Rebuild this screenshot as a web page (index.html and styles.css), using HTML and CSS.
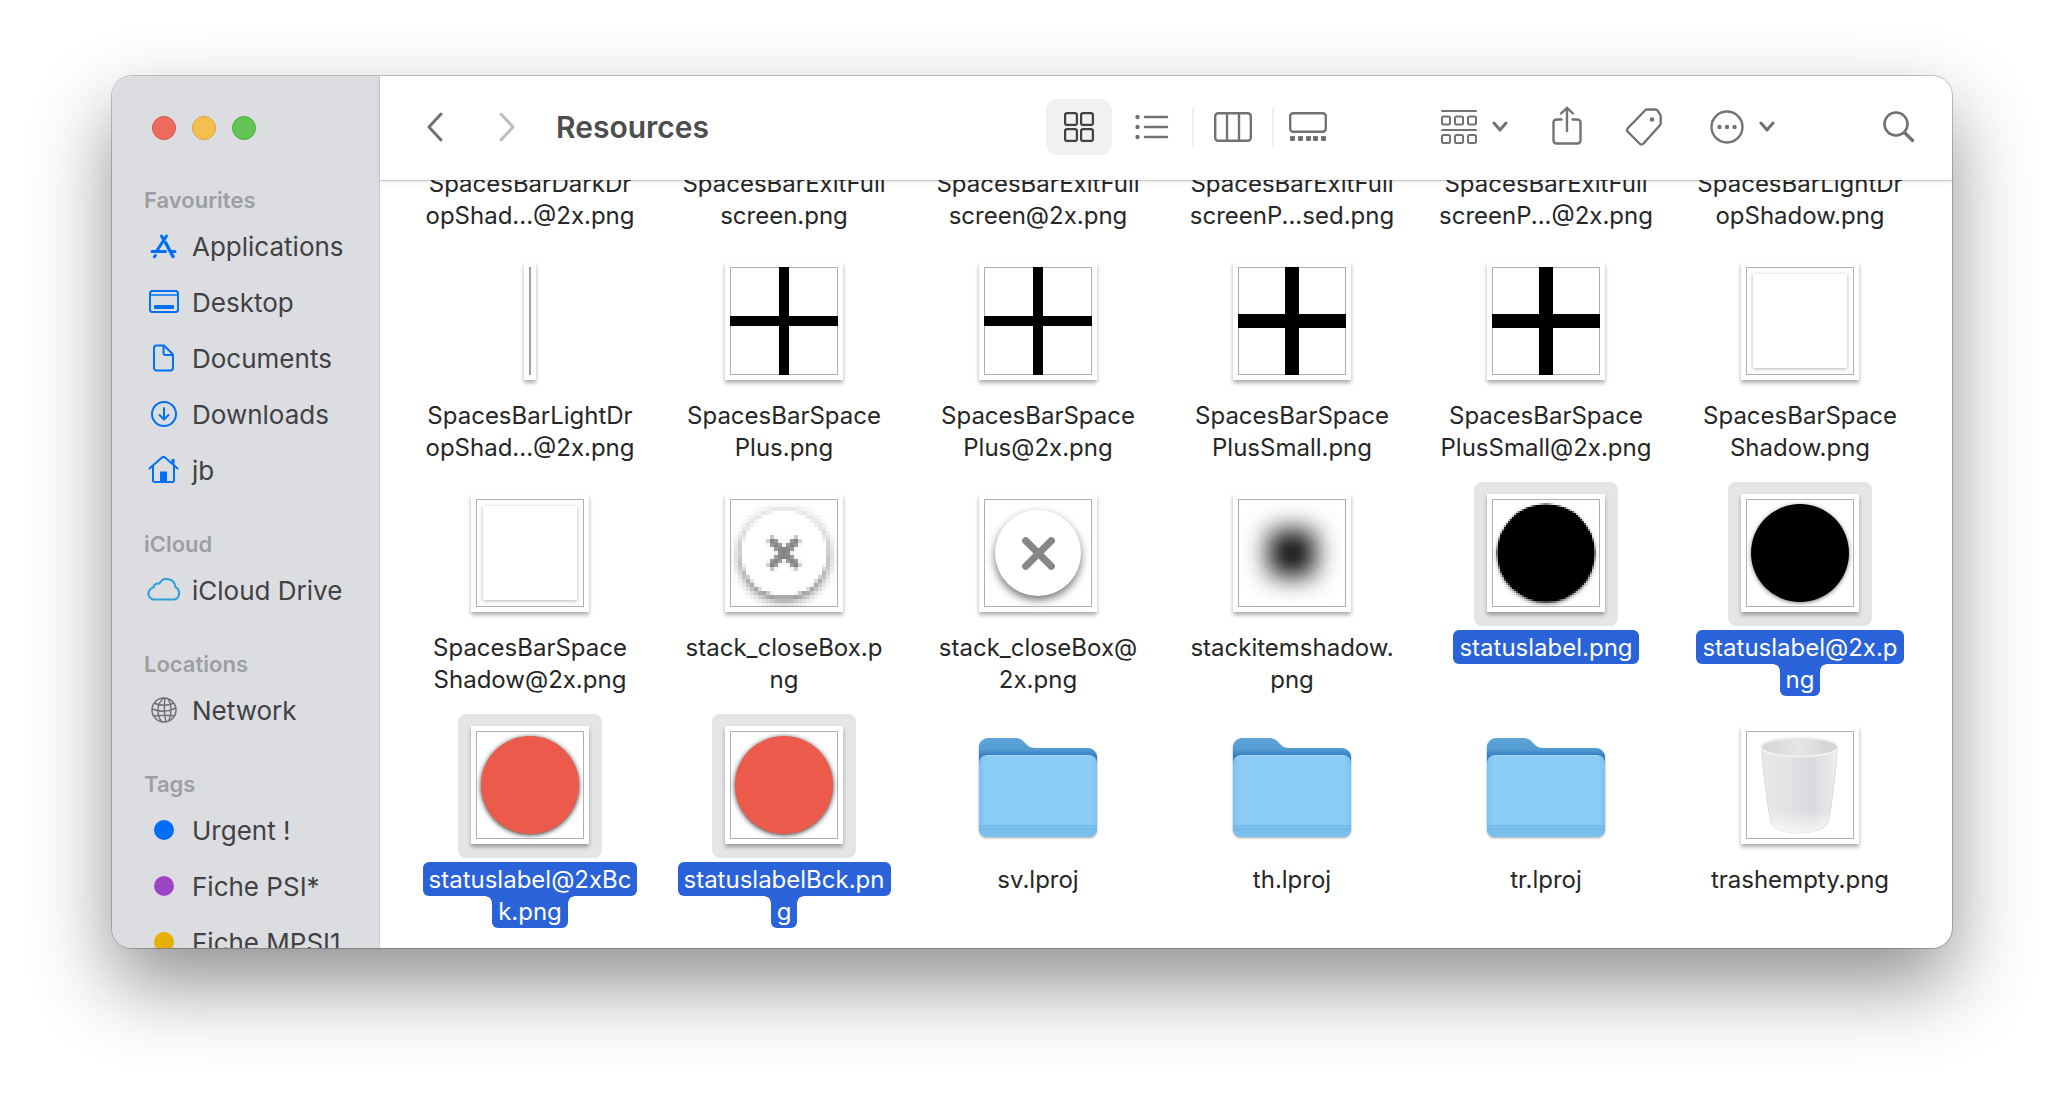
FILE: index.html
```html
<!DOCTYPE html>
<html lang="en">
<head>
<meta charset="utf-8">
<title>Resources</title>
<link rel="stylesheet" href="styles.css">
</head>
<body>
<svg class="defs" aria-hidden="true">
  <defs>
    <linearGradient id="folder-back" x1="0" y1="0" x2="0" y2="1"><stop offset="0" stop-color="#5ea5d8"/><stop offset=".3" stop-color="#529bd2"/><stop offset=".5" stop-color="#3279c0"/><stop offset="1" stop-color="#3279c0"/></linearGradient>
    <linearGradient id="folder-front" x1="0" y1="0" x2="1" y2="0"><stop offset="0" stop-color="#7cc2ef"/><stop offset=".06" stop-color="#8bcdf7"/><stop offset=".94" stop-color="#8bcdf7"/><stop offset="1" stop-color="#7cc2ef"/></linearGradient>
    <linearGradient id="bin-body" x1="0" y1="0" x2="1" y2="0"><stop offset="0" stop-color="#e9e9eb"/><stop offset=".3" stop-color="#e3e4e6"/><stop offset=".65" stop-color="#d9dadd"/><stop offset=".9" stop-color="#e6e7e9"/><stop offset="1" stop-color="#f3f3f4"/></linearGradient>
    <linearGradient id="bin-mouth" x1="0" y1="0" x2="1" y2="0"><stop offset="0" stop-color="#d3d4d7"/><stop offset=".5" stop-color="#e6e6e8"/><stop offset="1" stop-color="#cfd0d3"/></linearGradient>
    <linearGradient id="bin-foot" x1="0" y1="0" x2="0" y2="1"><stop offset="0" stop-color="#fff" stop-opacity="0"/><stop offset="1" stop-color="#fff" stop-opacity=".75"/></linearGradient>
    <symbol id="folder" viewBox="0 0 118 100">
      <path d="M0 18V9a9 9 0 0 1 9-9h27c4 0 6 1 9 4l3 3c2 2 4 3 8 3h53a9 9 0 0 1 9 9v19H0z" fill="url(#folder-back)"/>
      <rect y="17" width="118" height="82" rx="8" fill="url(#folder-front)"/>
      <path d="M8 17.500h102" stroke="#a5daf9"/>
      <path d="M0 88h118v3a8 8 0 0 1-8 8H8a8 8 0 0 1-8-8z" fill="#74bbe9" opacity=".7"/>
      <path d="M0 87.500h118M0 91.500h118" stroke="#69afe0" opacity=".6"/>
    </symbol>
    <symbol id="chevron" viewBox="0 0 16 12"><path d="M2 2l6 7 6-7" fill="none" stroke="currentColor" stroke-width="3" stroke-linecap="round" stroke-linejoin="round"/></symbol>
  </defs>
</svg>
<div class="window">
  <nav class="sidebar" aria-label="Sidebar">
    <div class="lights">
      <button class="light light-close" aria-label="Close"></button>
      <button class="light light-minimise" aria-label="Minimise"></button>
      <button class="light light-zoom" aria-label="Zoom"></button>
    </div>
    <h2>Favourites</h2>
    <ul>
      <li><a href="#"><svg class="icon" width="40" height="32" viewBox="0 0 40 32"><g fill="none" stroke="currentColor" stroke-width="3" stroke-linecap="round"><path d="M17.500 6l2 3.500M22.500 6L13 20.500"/><path d="M8 21.500h13.500M27.500 21.500H31"/><path d="M21.500 12.500L29 26.500" stroke-width="3.400"/><path d="M11.300 25.500l-.8 1.300"/></g></svg>Applications</a></li>
      <li><a href="#"><svg class="icon" width="40" height="32" viewBox="0 0 40 32"><rect x="6" y="5" width="28" height="21" rx="2.500" fill="none" stroke="currentColor" stroke-width="2"/><path d="M6 9h28" stroke="currentColor" stroke-width="1.500"/><rect x="10" y="19" width="20" height="4" rx="1" fill="currentColor"/></svg>Desktop</a></li>
      <li><a href="#"><svg class="icon" width="40" height="32" viewBox="0 0 40 32"><path d="M12.500 3.500H20l9 9V26a2.500 2.500 0 0 1-2.500 2.500h-14A2.500 2.500 0 0 1 10 26V6a2.500 2.500 0 0 1 2.500-2.500zM19.500 3.500v7.500a2 2 0 0 0 2 2H29" fill="none" stroke="currentColor" stroke-width="2"/></svg>Documents</a></li>
      <li><a href="#"><svg class="icon" width="40" height="32" viewBox="0 0 40 32"><circle cx="20" cy="16" r="12" fill="none" stroke="currentColor" stroke-width="2"/><path d="M20 10v11M15.500 17l4.500 4.500 4.500-4.500" fill="none" stroke="currentColor" stroke-width="2" stroke-linecap="round" stroke-linejoin="round"/></svg>Downloads</a></li>
      <li><a href="#"><svg class="icon" width="40" height="32" viewBox="0 0 40 32"><path d="M5.500 14.500L18 3.500q1.500-1.200 3 0l12.500 11M9 12.500V26.500a1.500 1.500 0 0 0 1.500 1.500h18a1.500 1.500 0 0 0 1.500-1.500V12.500" fill="none" stroke="currentColor" stroke-width="2" stroke-linecap="round"/><path d="M27.500 5h3v7.500l-3-2.800z" fill="currentColor"/><path d="M16 28V17.500h7V28z" fill="currentColor"/></svg>jb</a></li>
    </ul>
    <h2>iCloud</h2>
    <ul>
      <li><a href="#"><svg class="icon icon-cloud" width="40" height="32" viewBox="0 0 40 32"><path d="M11 25.500a6 6 0 0 1-1.500-11.900c.3-3 3-4.800 5.900-4 3.500-7.300 15.200-5.600 15.900 3.400 5.600 2.900 5 12.500-2.300 12.500z" fill="none" stroke="currentColor" stroke-width="2" stroke-linejoin="round"/></svg>iCloud Drive</a></li>
    </ul>
    <h2>Locations</h2>
    <ul>
      <li><a href="#"><svg class="icon icon-network" width="40" height="32" viewBox="0 0 40 32"><g fill="none" stroke="currentColor" stroke-width="1.500"><circle cx="20" cy="16" r="12"/><path d="M20 4c-4 3-6 7-6 12s1 9 4 12M21 4c-1 8-1 16 1 24M24 4.800c4 6 4 13 1 22M10 9c5 3 14 3 20 0M8 15c8 3 16 3 24-1M9.500 22c7-1 14-1 21 0"/></g></svg>Network</a></li>
    </ul>
    <h2>Tags</h2>
    <ul>
      <li><a href="#"><span class="tag tag-blue"></span>Urgent !</a></li>
      <li><a href="#"><span class="tag tag-purple"></span>Fiche PSI*</a></li>
      <li><a href="#"><span class="tag tag-yellow"></span>Fiche MPSI1</a></li>
    </ul>
  </nav>
  <main class="main">
    <header class="toolbar">
      <div class="history">
        <button aria-label="Back"><svg width="18" height="30" viewBox="0 0 18 30"><path d="M15 2L3 15l12 13" fill="none" stroke="currentColor" stroke-width="3" stroke-linecap="round" stroke-linejoin="round"/></svg></button>
        <button aria-label="Forward" disabled><svg width="18" height="30" viewBox="0 0 18 30"><path d="M3 2l12 13L3 28" fill="none" stroke="currentColor" stroke-width="3" stroke-linecap="round" stroke-linejoin="round"/></svg></button>
      </div>
      <h1>Resources</h1>
      <div class="views">
        <button class="view view-current" aria-label="Icons"><svg width="30" height="30" viewBox="0 0 30 30"><g fill="none" stroke="currentColor" stroke-width="2.200"><rect x="1.100" y="1.100" width="11.800" height="11.800" rx="2"/><rect x="17.100" y="1.100" width="11.800" height="11.800" rx="2"/><rect x="1.100" y="17.100" width="11.800" height="11.800" rx="2"/><rect x="17.100" y="17.100" width="11.800" height="11.800" rx="2"/></g></svg></button>
        <button class="view" aria-label="List"><svg width="34" height="26" viewBox="0 0 34 26"><g fill="currentColor"><circle cx="2.500" cy="3" r="2.200"/><circle cx="2.500" cy="13" r="2.200"/><circle cx="2.500" cy="23" r="2.200"/></g><path d="M10 3h22M10 13h22M10 23h22" stroke="currentColor" stroke-width="2.400" stroke-linecap="round"/></svg></button>
        <span class="divider"></span>
        <button class="view view-columns" aria-label="Columns"><svg width="38" height="30" viewBox="0 0 38 30"><g fill="none" stroke="currentColor" stroke-width="2.400"><rect x="1.200" y="1.200" width="35.600" height="27.600" rx="3"/><path d="M13 1v28M25 1v28"/></g></svg></button>
        <span class="divider"></span>
        <button class="view view-gallery" aria-label="Gallery"><svg width="38" height="30" viewBox="0 0 38 30"><rect x="1.200" y="1.200" width="35.600" height="18.600" rx="3" fill="none" stroke="currentColor" stroke-width="2.400"/><g fill="currentColor"><rect x="1" y="24" width="5" height="5" rx="1"/><rect x="9" y="24" width="5" height="5" rx="1"/><rect x="17" y="24" width="5" height="5" rx="1"/><rect x="24" y="24" width="5" height="5" rx="1"/><rect x="32" y="24" width="5" height="5" rx="1"/></g></svg></button>
      </div>
      <div class="actions">
        <button class="menu" aria-label="Group"><svg width="36" height="36" viewBox="0 0 36 36"><g fill="none" stroke="currentColor" stroke-width="2"><path d="M1 2h34M1 21h34" stroke-linecap="round"/><rect x="1" y="7.500" width="8" height="8" rx="1.500"/><rect x="14" y="7.500" width="8" height="8" rx="1.500"/><rect x="27" y="7.500" width="8" height="8" rx="1.500"/><rect x="1" y="26" width="8" height="8" rx="1.500"/><rect x="14" y="26" width="8" height="8" rx="1.500"/><rect x="27" y="26" width="8" height="8" rx="1.500"/></g></svg><svg width="16" height="12"><use href="#chevron"/></svg></button>
        <button class="share" aria-label="Share"><svg width="30" height="40" viewBox="0 0 30 40"><path d="M9.500 13.500H4.500a3 3 0 0 0-3 3v18a3 3 0 0 0 3 3h21a3 3 0 0 0 3-3v-18a3 3 0 0 0-3-3h-5M15 25V2M9 7.500L15 1.800l6 5.700" fill="none" stroke="currentColor" stroke-width="2.400" stroke-linecap="round" stroke-linejoin="round"/></svg></button>
        <button aria-label="Tags"><svg width="36" height="38" viewBox="0 0 36 38"><path d="M19 2.500q1-1 2.500-1H29q1.500 0 2.500 1l2 3q1.200 1.500 1.200 3V15q0 1.500-1 2.500L17.500 35.500q-2 2-4 0L2 24q-2-2 0-4z" fill="none" stroke="currentColor" stroke-width="2.400" stroke-linejoin="round"/><circle cx="26" cy="11.500" r="2.300" fill="currentColor"/></svg></button>
        <button class="menu more" aria-label="More"><svg width="34" height="34" viewBox="0 0 34 34"><circle cx="17" cy="17" r="15.500" fill="none" stroke="currentColor" stroke-width="2.400"/><g fill="currentColor"><circle cx="9.500" cy="17" r="2.200"/><circle cx="17" cy="17" r="2.200"/><circle cx="24.500" cy="17" r="2.200"/></g></svg><svg width="16" height="12"><use href="#chevron"/></svg></button>
        <button class="search" aria-label="Search"><svg width="32" height="32" viewBox="0 0 32 32"><circle cx="13" cy="13" r="11.500" fill="none" stroke="currentColor" stroke-width="2.600"/><path d="M21.500 21.500l8 8" stroke="currentColor" stroke-width="3.400" stroke-linecap="round"/></svg></button>
      </div>
    </header>
    <div class="scroller">
      <ul class="files">
        <li class="file"><div class="preview"><div class="sheet"></div></div><p class="name"><span>SpacesBarDarkDr</span><span>opShad...@2x.png</span></p></li>
        <li class="file"><div class="preview"><div class="sheet"></div></div><p class="name"><span>SpacesBarExitFull</span><span>screen.png</span></p></li>
        <li class="file"><div class="preview"><div class="sheet"></div></div><p class="name"><span>SpacesBarExitFull</span><span>screen@2x.png</span></p></li>
        <li class="file"><div class="preview"><div class="sheet"></div></div><p class="name"><span>SpacesBarExitFull</span><span>screenP...sed.png</span></p></li>
        <li class="file"><div class="preview"><div class="sheet"></div></div><p class="name"><span>SpacesBarExitFull</span><span>screenP...@2x.png</span></p></li>
        <li class="file"><div class="preview"><div class="sheet"></div></div><p class="name"><span>SpacesBarLightDr</span><span>opShadow.png</span></p></li>

        <li class="file"><div class="preview"><div class="sheet sheet-strip"></div></div><p class="name"><span>SpacesBarLightDr</span><span>opShad...@2x.png</span></p></li>
        <li class="file"><div class="preview"><div class="sheet"><svg viewBox="0 0 108 108"><path d="M54 0v108M0 54h108" stroke="#000" stroke-width="10"/></svg></div></div><p class="name"><span>SpacesBarSpace</span><span>Plus.png</span></p></li>
        <li class="file"><div class="preview"><div class="sheet"><svg viewBox="0 0 108 108"><path d="M54 0v108M0 54h108" stroke="#000" stroke-width="10"/></svg></div></div><p class="name"><span>SpacesBarSpace</span><span>Plus@2x.png</span></p></li>
        <li class="file"><div class="preview"><div class="sheet"><svg viewBox="0 0 108 108"><path d="M54 0v108M0 54h108" stroke="#000" stroke-width="14"/></svg></div></div><p class="name"><span>SpacesBarSpace</span><span>PlusSmall.png</span></p></li>
        <li class="file"><div class="preview"><div class="sheet"><svg viewBox="0 0 108 108"><path d="M54 0v108M0 54h108" stroke="#000" stroke-width="14"/></svg></div></div><p class="name"><span>SpacesBarSpace</span><span>PlusSmall@2x.png</span></p></li>
        <li class="file"><div class="preview"><div class="sheet"><div class="space-shadow"></div></div></div><p class="name"><span>SpacesBarSpace</span><span>Shadow.png</span></p></li>

        <li class="file"><div class="preview"><div class="sheet"><div class="space-shadow"></div></div></div><p class="name"><span>SpacesBarSpace</span><span>Shadow@2x.png</span></p></li>
        <li class="file"><div class="preview"><div class="sheet"><canvas class="pixels" id="close-box" width="27" height="27"></canvas></div></div><p class="name"><span>stack_closeBox.p</span><span>ng</span></p></li>
        <li class="file"><div class="preview"><div class="sheet"><div class="close-box"><svg viewBox="0 0 84 84"><path d="M30 30l25 25M55 30L30 55" stroke="#868686" stroke-width="7" stroke-linecap="round"/></svg></div></div></div><p class="name"><span>stack_closeBox@</span><span>2x.png</span></p></li>
        <li class="file"><div class="preview"><div class="sheet"><div class="item-shadow"></div></div></div><p class="name"><span>stackitemshadow.</span><span>png</span></p></li>
        <li class="file file-selected"><div class="preview"><div class="sheet"><canvas class="pixels" id="status-label" width="54" height="54"></canvas></div></div><p class="name"><span>statuslabel.png</span></p></li>
        <li class="file file-selected"><div class="preview"><div class="sheet"><div class="disc disc-black"></div></div></div><p class="name"><span>statuslabel@2x.p</span><span>ng</span></p></li>

        <li class="file file-selected"><div class="preview"><div class="sheet"><div class="disc disc-red"></div></div></div><p class="name"><span>statuslabel@2xBc</span><span>k.png</span></p></li>
        <li class="file file-selected"><div class="preview"><div class="sheet"><div class="disc disc-red"></div></div></div><p class="name"><span>statuslabelBck.pn</span><span>g</span></p></li>
        <li class="file"><div class="preview"><svg class="folder" width="118" height="100"><use href="#folder"/></svg></div><p class="name"><span>sv.lproj</span></p></li>
        <li class="file"><div class="preview"><svg class="folder" width="118" height="100"><use href="#folder"/></svg></div><p class="name"><span>th.lproj</span></p></li>
        <li class="file"><div class="preview"><svg class="folder" width="118" height="100"><use href="#folder"/></svg></div><p class="name"><span>tr.lproj</span></p></li>
        <li class="file"><div class="preview"><div class="sheet"><svg class="bin" viewBox="0 0 108 108"><path d="M15.500 16c2 28 5 52 9 74 2 16 55 16 58 0 4-22 7-46 9-74z" fill="url(#bin-body)" stroke="#d9dadc"/><path d="M23 80l1.500 10c2 16 55 16 58 0L84 80z" fill="url(#bin-foot)"/><ellipse cx="53.500" cy="16" rx="38.500" ry="9.500" fill="url(#bin-mouth)" stroke="#f1f1f2" stroke-width="2"/></svg></div></div><p class="name"><span>trashempty.png</span></p></li>
      </ul>
    </div>
  </main>
</div>
<script src="previews.js"></script>
</body>
</html>
```
FILE: styles.css
```css
* { box-sizing: border-box; }
html, body { height: 100%; }
body {
  margin: 0;
  padding: 76px 112px 148px;
  background: #fff;
  font-family: Inter, "Liberation Sans", sans-serif;
  overflow: hidden;
}
h1, h2, p, ul { margin: 0; padding: 0; }
ul { list-style: none; }
button { padding: 0; border: 0; background: none; color: inherit; font: inherit; }
svg { display: block; flex: none; }
.defs { position: absolute; width: 0; height: 0; }

.window {
  display: flex;
  height: 100%;
  border-radius: 20px;
  overflow: hidden;
  background: #fff;
  box-shadow: 0 0 0 1px rgba(0, 0, 0, .22), 0 36px 80px rgba(0, 0, 0, .44);
}

.sidebar {
  flex: none;
  width: 268px;
  padding: 40px 0 0 32px;
  background: #dcdde1;
  border-right: 1px solid #d0d1d4;
  overflow: hidden;
}
.lights { display: flex; gap: 16px; padding: 0 0 15px 8px; }
.light { width: 24px; height: 24px; border-radius: 50%; border: 1px solid; }
.light-close { background: #ed6a5e; border-color: #d55549; }
.light-minimise { background: #f5bf4f; border-color: #dca33a; }
.light-zoom { background: #61c554; border-color: #4ead3c; }
.sidebar h2 {
  padding-top: 26px;
  font-size: 22px;
  line-height: 38px;
  font-weight: 600;
  color: #9d9ea2;
}
.sidebar ul { margin: -1px 0 1px; }
.sidebar a {
  display: flex;
  align-items: center;
  gap: 8px;
  height: 56px;
  font-size: 26px;
  color: #414144;
  text-decoration: none;
  white-space: nowrap;
}
.icon { color: #0070f5; }
.icon-cloud { color: #2d9fd8; }
.icon-network { color: #6f7073; }
.tag { width: 20px; height: 20px; margin: 0 10px; border-radius: 50%; }
.tag-blue { background: #006ef8; }
.tag-purple { background: #9c46c6; }
.tag-yellow { background: #e5b000; }

.main { flex: 1; min-width: 0; display: flex; flex-direction: column; }
.toolbar {
  position: relative;
  flex: none;
  display: flex;
  align-items: center;
  height: 104px;
  padding: 0 37px 2px 46px;
  background: #fff;
  color: #727272;
  box-shadow: 0 1px 1px rgba(0, 0, 0, .16), 0 2px 6px rgba(0, 0, 0, .08);
}
.history { display: flex; gap: 54px; }
.history button:disabled { color: #bebebe; }
.toolbar h1 { flex: 1; padding-left: 40px; font-size: 30px; line-height: 40px; font-weight: 600; color: #4d4d4d; }
.views { display: flex; align-items: center; gap: 7px; }
.view { display: grid; place-items: center; width: 66px; height: 56px; border-radius: 12px; }
.view-current { background: #f1f1f1; color: #424242; }
.view-columns { width: 64px; }
.view-gallery { width: 54px; }
.divider { width: 2px; height: 40px; background: #f0f0f0; }
.actions { display: flex; align-items: center; gap: 44px; padding-left: 106px; }
.menu { display: flex; align-items: center; gap: 15px; }
.share { padding-bottom: 2px; }
.more { margin-left: 4px; }
.search { margin-left: 64px; }

.scroller {
  flex: 1;
  min-height: 0;
  display: flex;
  flex-direction: column;
  justify-content: flex-end;
  padding: 0 25px 2px 23px;
  overflow: hidden;
}
.files { display: grid; grid-template-columns: repeat(6, 1fr); grid-auto-rows: 232px; }
.file { display: flex; flex-direction: column; align-items: center; gap: 6px; }
.preview {
  display: flex;
  justify-content: center;
  width: 144px;
  height: 144px;
  padding-top: 12px;
  border-radius: 8px;
}
.sheet {
  display: grid;
  place-items: center;
  width: 118px;
  height: 118px;
  border: 5px solid #fff;
  background: #fff;
  outline: 1px solid #b0b0b0;
  outline-offset: -6px;
  box-shadow: 0 3px 4px rgba(0, 0, 0, .32);
}
.sheet > svg, .pixels { width: 108px; height: 108px; }
/* The previews cover the sheet's hairline. */
.sheet > svg, .sheet > canvas { position: relative; }
.pixels { image-rendering: pixelated; }
.sheet-strip { width: 12px; background: #a0a0a0; outline: 0; }
.space-shadow { width: 94px; height: 94px; background: #fff; box-shadow: 0 1px 4px rgba(0, 0, 0, .3); }
.close-box { width: 86px; height: 86px; border-radius: 50%; background: #fff; box-shadow: 0 4px 8px rgba(0, 0, 0, .55); }
.item-shadow { width: 46px; height: 46px; border-radius: 8px; background: #080808; filter: blur(13px); }
.disc { width: 98px; height: 98px; border-radius: 50%; }
.disc-black { background: #000; box-shadow: 0 1px 4px rgba(0, 0, 0, .5); }
.disc-red { background: #ec5a4b; box-shadow: 0 1px 5px rgba(0, 0, 0, .8); }
.folder { margin-top: 12px; filter: drop-shadow(0 1px 1px rgba(0, 0, 0, .35)); }

.name {
  display: flex;
  flex-direction: column;
  align-items: center;
  font-size: 24px;
  line-height: 32px;
  color: #262626;
  white-space: nowrap;
}
.file-selected .preview { background: #e5e5e5; }
.file-selected .name { color: #fff; }
.file-selected .name span {
  position: relative;
  margin-top: -2px;
  padding: 2px 6px 0;
  border-radius: 6px;
  background: #2962d9;
}
.file-selected .name span + span { margin-top: 0; padding-top: 0; border-radius: 0 0 6px 6px; }
.file-selected .name span + span::before,
.file-selected .name span + span::after {
  content: "";
  position: absolute;
  top: 0;
  width: 6px;
  height: 6px;
}
.file-selected .name span + span::before { right: 100%; background: radial-gradient(circle at 0 100%, transparent 5px, #2962d9 6px); }
.file-selected .name span + span::after { left: 100%; background: radial-gradient(circle at 100% 100%, transparent 5px, #2962d9 6px); }
```
FILE: previews.js
```js
// Low-resolution previews are drawn at their native size and scaled up by CSS.
function context(id) {
  return document.getElementById(id).getContext('2d');
}

function disc(ctx, x, y, r, fill) {
  ctx.fillStyle = fill;
  ctx.beginPath();
  ctx.arc(x, y, r, 0, Math.PI * 2);
  ctx.fill();
}

const box = context('close-box');
box.shadowColor = 'rgba(0, 0, 0, .65)';
box.shadowBlur = 3;
box.shadowOffsetY = 1;
disc(box, 13.5, 13.5, 10.8, '#fff');
box.shadowColor = 'transparent';
box.strokeStyle = '#858585';
box.lineWidth = 1.8;
box.beginPath();
box.moveTo(10, 10);
box.lineTo(17, 17);
box.moveTo(17, 10);
box.lineTo(10, 17);
box.stroke();

const label = context('status-label');
label.shadowColor = 'rgba(0, 0, 0, .5)';
label.shadowBlur = 2;
label.shadowOffsetY = 1;
disc(label, 27, 27, 24.5, '#000');
```
